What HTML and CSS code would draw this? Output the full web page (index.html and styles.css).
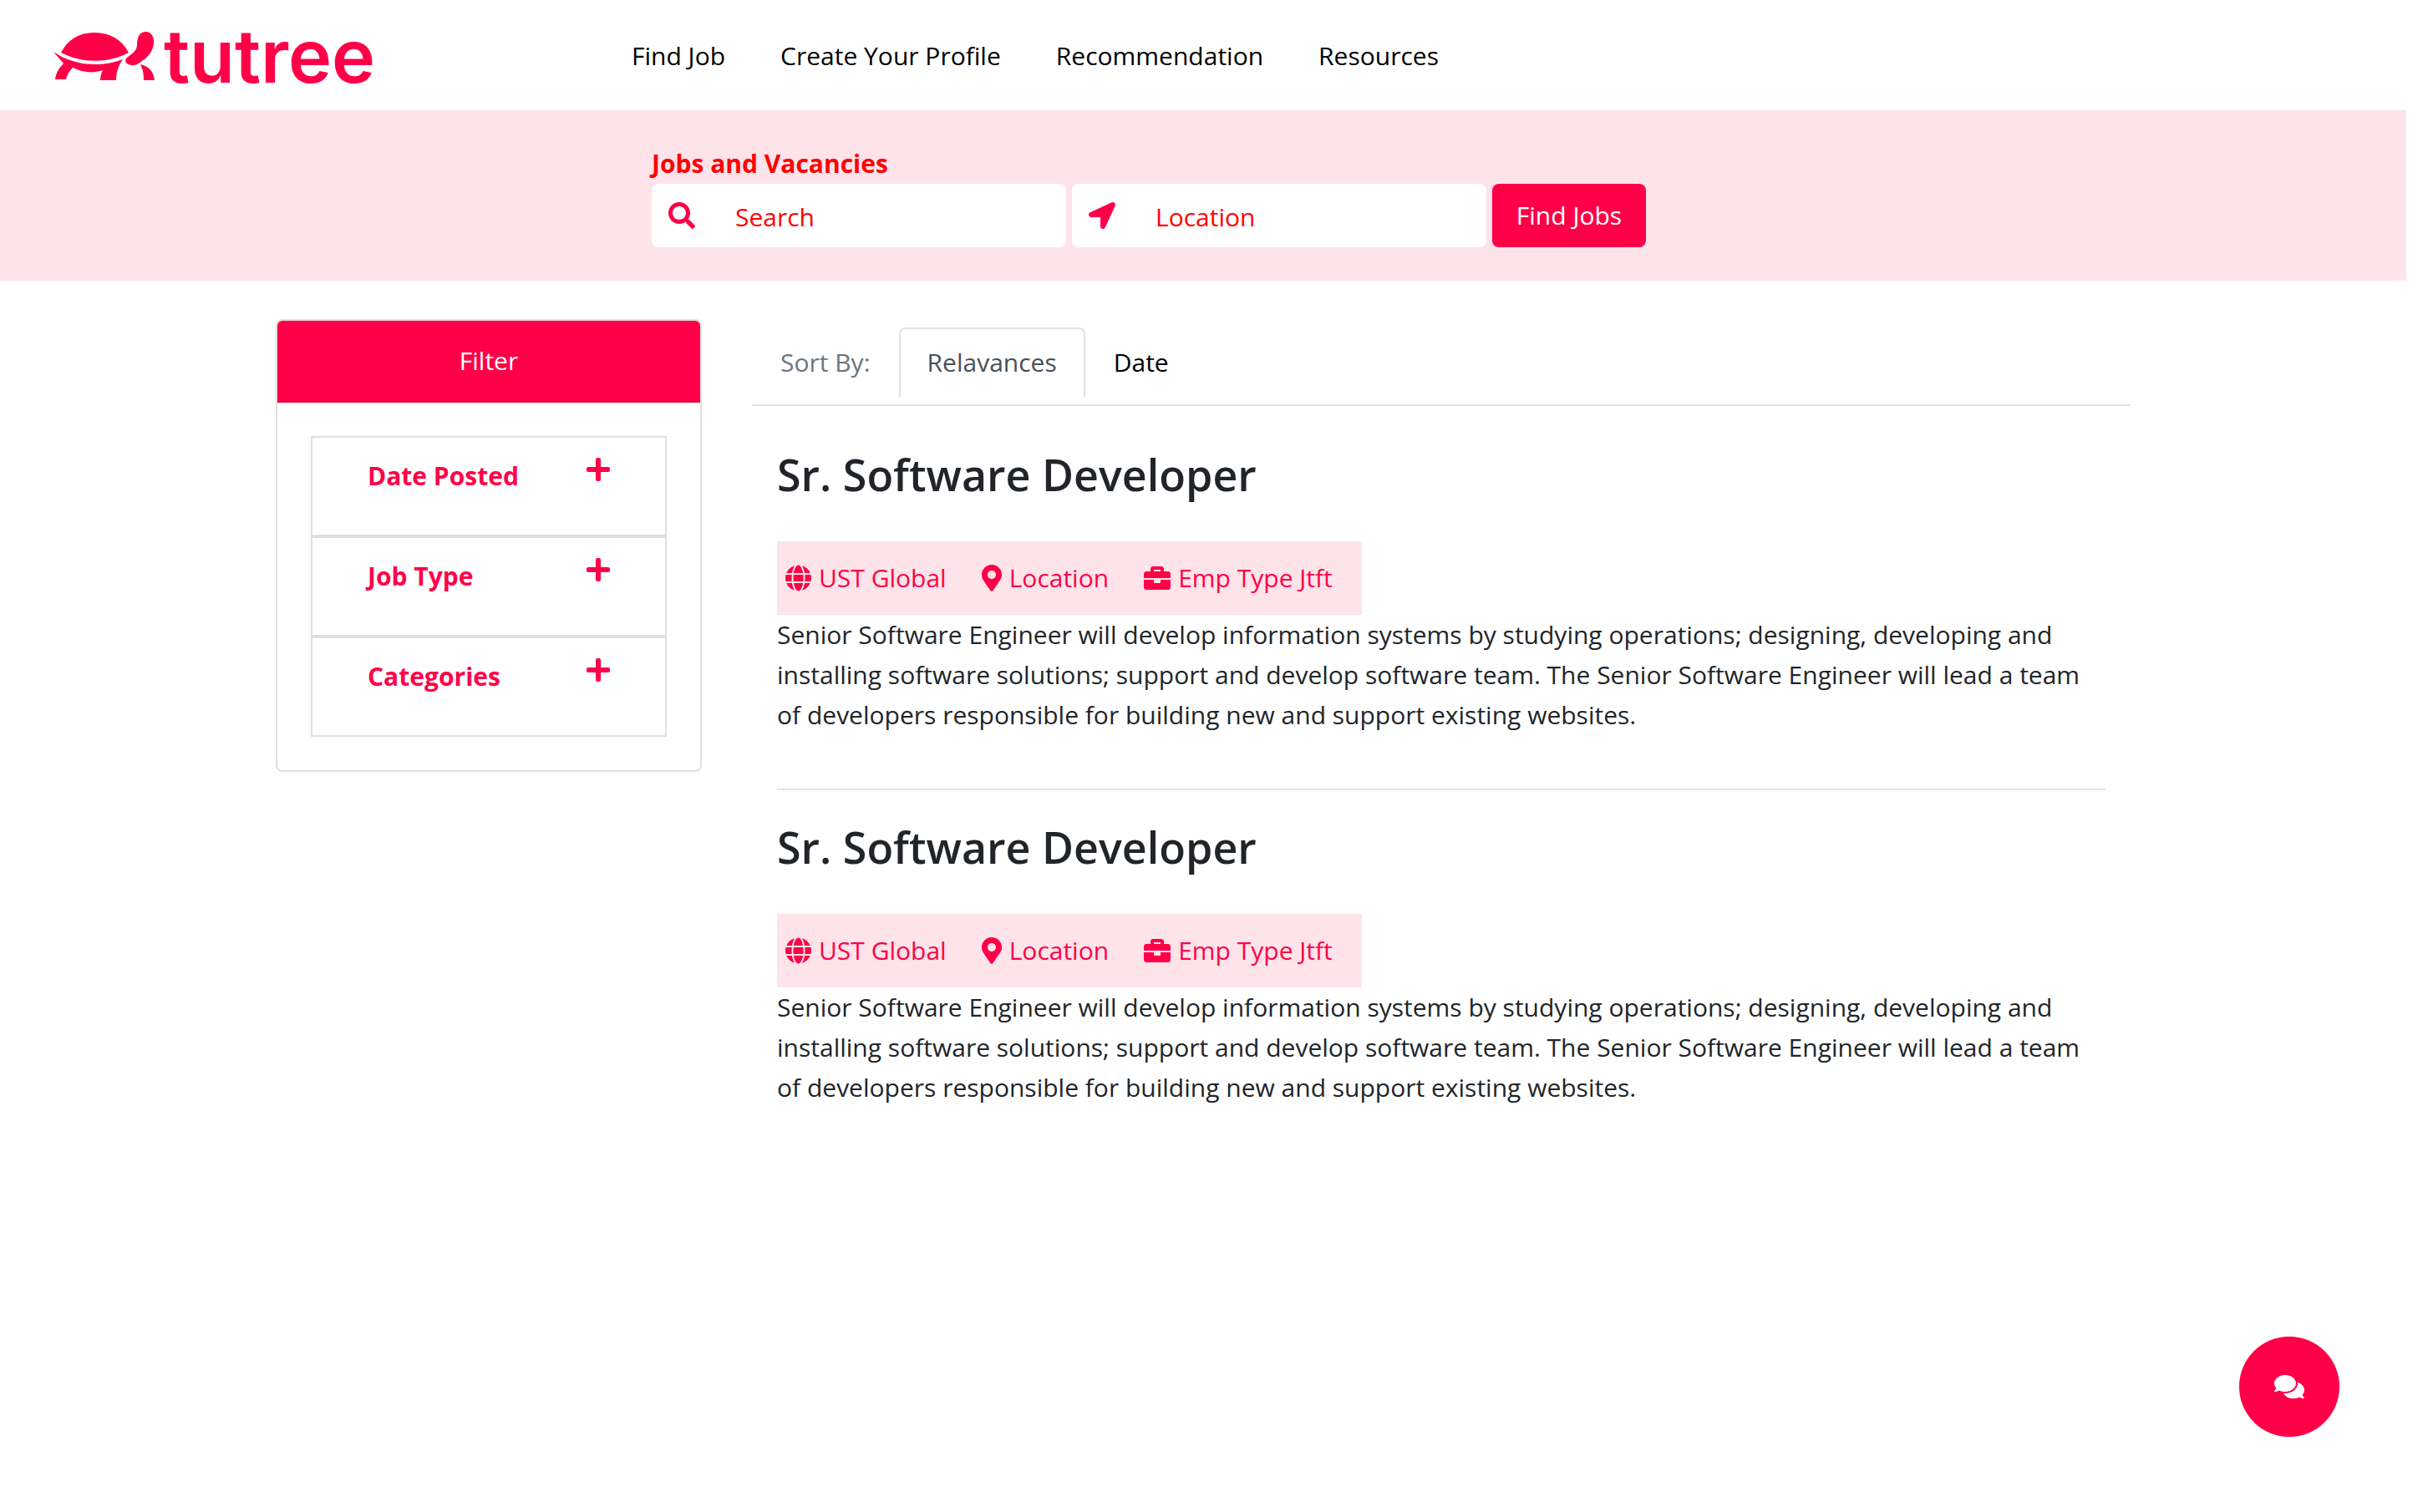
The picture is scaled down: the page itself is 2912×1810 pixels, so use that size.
FILE: index.html
```html
<!DOCTYPE html>
<html lang="en">
<head>
<meta charset="utf-8">
<title>tutree – Jobs and Vacancies</title>
<link rel="stylesheet" href="styles.css">
</head>
<body>
<svg class="sprite" aria-hidden="true">
  <symbol id="i-search" viewBox="0 0 512 512"><path d="M505 442.7L405.3 343c-4.500-4.500-10.600-7-17-7H372c27.600-35.300 44-79.700 44-128C416 93.100 322.900 0 208 0S0 93.100 0 208s93.100 208 208 208c48.300 0 92.700-16.400 128-44v16.300c0 6.400 2.500 12.500 7 17l99.700 99.700c9.400 9.400 24.600 9.400 33.900 0l28.300-28.300c9.400-9.400 9.400-24.600.1-34zM208 336c-70.700 0-128-57.200-128-128 0-70.700 57.200-128 128-128 70.700 0 128 57.200 128 128 0 70.700-57.200 128-128 128z"/></symbol>
  <symbol id="i-arrow" viewBox="0 0 512 512"><path d="M444.520 3.520L28.740 195.420c-47.970 22.390-31.980 92.750 19.190 92.750h175.910v175.910c0 51.170 70.360 67.170 92.750 19.190l191.900-415.780c15.990-38.390-25.590-79.970-63.970-63.970z"/></symbol>
  <symbol id="i-plus" viewBox="0 0 448 512"><path d="M416 208H272V64c0-17.670-14.330-32-32-32h-32c-17.670 0-32 14.330-32 32v144H32c-17.670 0-32 14.330-32 32v32c0 17.670 14.330 32 32 32h144v144c0 17.670 14.330 32 32 32h32c17.670 0 32-14.330 32-32V304h144c17.670 0 32-14.330 32-32v-32c0-17.670-14.330-32-32-32z"/></symbol>
  <symbol id="i-globe" viewBox="0 0 496 512"><path d="M336.500 160C322 70.700 287.800 8 248 8s-74 62.700-88.500 152h177zM152 256c0 22.200 1.200 43.500 3.300 64h185.300c2.100-20.500 3.300-41.800 3.300-64s-1.200-43.500-3.300-64H155.300c-2.100 20.500-3.300 41.800-3.300 64zm324.700-96c-28.600-67.900-86.500-120.400-158-141.600 24.400 33.800 41.200 84.700 50 141.600h108zM177.200 18.400C105.800 39.600 47.800 92.100 19.300 160h108c8.700-56.900 25.500-107.800 49.900-141.600zM487.400 192H372.700c2.100 21 3.300 42.500 3.300 64s-1.200 43-3.300 64h114.600c5.500-20.500 8.600-41.800 8.600-64s-3.100-43.500-8.500-64zM120 256c0-21.500 1.200-43 3.300-64H8.600C3.200 212.500 0 233.800 0 256s3.200 43.500 8.600 64h114.600c-2-21-3.200-42.500-3.200-64zm39.500 96c14.500 89.300 48.700 152 88.500 152s74-62.700 88.500-152h-177zm159.300 141.600c71.400-21.200 129.400-73.700 158-141.600h-108c-8.800 56.900-25.600 107.800-50 141.600zM19.300 352c28.600 67.900 86.500 120.400 158 141.600-24.400-33.800-41.200-84.700-50-141.600h-108z"/></symbol>
  <symbol id="i-marker" viewBox="0 0 384 512"><path d="M172.268 501.670C26.970 291.031 0 269.413 0 192 0 85.961 85.961 0 192 0s192 85.961 192 192c0 77.413-26.970 99.031-172.268 309.670-9.535 13.774-29.930 13.773-39.464 0zM192 272c44.183 0 80-35.817 80-80s-35.817-80-80-80-80 35.817-80 80 35.817 80 80 80z"/></symbol>
  <symbol id="i-briefcase" viewBox="0 0 512 512"><path d="M320 336c0 8.840-7.160 16-16 16h-96c-8.840 0-16-7.160-16-16v-48H0v144c0 25.600 22.400 48 48 48h416c25.600 0 48-22.400 48-48V288H320v48zm144-208h-80V80c0-25.600-22.400-48-48-48H176c-25.600 0-48 22.400-48 48v48H48c-25.600 0-48 22.400-48 48v80h512v-80c0-25.600-22.400-48-48-48zm-144 0H192V96h128v32z"/></symbol>
  <symbol id="i-comments" viewBox="0 0 576 512"><path d="M416 192c0-88.400-93.100-160-208-160S0 103.600 0 192c0 34.300 14.100 65.900 38 92-13.400 30.200-35.500 54.200-35.800 54.500-2.200 2.300-2.800 5.700-1.500 8.700S4.800 352 8 352c36.600 0 66.900-12.300 88.700-25 32.200 15.700 70.300 25 111.300 25 114.900 0 208-71.600 208-160zm122 220c23.900-26 38-57.700 38-92 0-66.900-53.500-124.200-129.300-148.100.9 6.600 1.300 13.300 1.300 20.100 0 105.900-107.700 192-240 192-10.800 0-21.300-.8-31.700-1.900C207.800 439.600 281.800 480 368 480c41 0 79.100-9.200 111.300-25 21.800 12.700 52.100 25 88.700 25 3.200 0 6.100-1.900 7.300-4.800 1.300-2.900.7-6.300-1.500-8.700-.3-.3-22.400-24.200-35.800-54.500z"/></symbol>
</svg>

<header class="header">
  <a class="logo" href="#" aria-label="tutree">
    <svg class="logo-turtle" viewBox="0 0 124 60" aria-hidden="true">
      <path d="M9 26C17 10 31 2 49 2s33 8 41 24C66 39 34 39 9 26z"/>
      <path d="M0 25C24 42 58 44 83 34c-5 7-8 15-8 25H56c0-4 1-8 3-12-11 4-24 3-36-3-4 4-7 9-8 14H2c1-8 5-14 10-19z"/>
      <path d="M109 1c7-1 12 5 11 14-1 8-5 14-11 19-5 3-9 8-16 7-6-1-9-5-5-9 5-4 12-8 12-15 0-8 2-15 9-16z"/>
      <path d="M104 40c10 2 16 9 17 19h-13c0-8-1-13-4-19z"/>
    </svg>
    <span class="logo-text">tutree</span>
  </a>
  <nav class="nav" aria-label="Main">
    <a href="#">Find Job</a>
    <a href="#">Create Your Profile</a>
    <a href="#">Recommendation</a>
    <a href="#">Resources</a>
  </nav>
</header>

<section class="search">
  <form class="search-form">
    <h1 class="search-title">Jobs and Vacancies</h1>
    <div class="search-row">
      <label class="field">
        <svg class="icon"><use href="#i-search"/></svg>
        <input type="text" placeholder="Search" aria-label="Search">
      </label>
      <label class="field">
        <svg class="icon"><use href="#i-arrow"/></svg>
        <input type="text" placeholder="Location" aria-label="Location">
      </label>
      <button class="find" type="button">Find Jobs</button>
    </div>
  </form>
</section>

<main class="container">
  <aside class="card">
    <h2 class="card-header">Filter</h2>
    <div class="card-body">
      <button class="filter" type="button"><span>Date Posted</span><svg class="icon icon-plus"><use href="#i-plus"/></svg></button>
      <button class="filter" type="button"><span>Job Type</span><svg class="icon icon-plus"><use href="#i-plus"/></svg></button>
      <button class="filter" type="button"><span>Categories</span><svg class="icon icon-plus"><use href="#i-plus"/></svg></button>
    </div>
  </aside>
  <section class="results">
    <div class="tabs">
      <span class="tab tab-label">Sort By:</span>
      <a class="tab tab-active" href="#">Relavances</a>
      <a class="tab" href="#">Date</a>
    </div>
    <article class="job">
      <h3 class="job-title">Sr. Software Developer</h3>
      <div class="meta">
        <span class="meta-item"><svg class="icon icon-globe"><use href="#i-globe"/></svg>UST Global</span>
        <span class="meta-item"><svg class="icon icon-marker"><use href="#i-marker"/></svg>Location</span>
        <span class="meta-item"><svg class="icon"><use href="#i-briefcase"/></svg>Emp Type Jtft</span>
      </div>
      <p class="job-text">Senior Software Engineer will develop information systems by studying operations; designing, developing and installing software solutions; support and develop software team. The Senior Software Engineer will lead a team of developers responsible for building new and support existing websites.</p>
    </article>
    <article class="job">
      <h3 class="job-title">Sr. Software Developer</h3>
      <div class="meta">
        <span class="meta-item"><svg class="icon icon-globe"><use href="#i-globe"/></svg>UST Global</span>
        <span class="meta-item"><svg class="icon icon-marker"><use href="#i-marker"/></svg>Location</span>
        <span class="meta-item"><svg class="icon"><use href="#i-briefcase"/></svg>Emp Type Jtft</span>
      </div>
      <p class="job-text">Senior Software Engineer will develop information systems by studying operations; designing, developing and installing software solutions; support and develop software team. The Senior Software Engineer will lead a team of developers responsible for building new and support existing websites.</p>
    </article>
  </section>
</main>

<button class="chat" type="button" aria-label="Open chat"><svg class="icon icon-comments"><use href="#i-comments"/></svg></button>
</body>
</html>
```
FILE: styles.css
```css
:root {
  --brand: #ff0048;
  --tint: #fee4ea;
  --line: #dfdfdf;
  --tab-line: #dee2e6;
}

* { box-sizing: border-box; }

body {
  margin: 0;
  padding-right: 32px;
  background: #fff;
  color: #212529;
  font-family: "Open Sans", "Noto Sans", sans-serif;
  font-size: 30px;
  line-height: 48px;
}

h1, h2, h3, p { margin: 0; }
a { color: #000; text-decoration: none; }
button, input { font: inherit; }
button { cursor: pointer; }

.sprite { display: none; }
.icon { width: 32px; height: 32px; fill: currentColor; flex: none; }
.icon-plus { width: 28px; }
.icon-globe { width: 31px; }
.icon-marker { width: 24px; }
.icon-comments { width: 36px; }

/* Header */
.header {
  display: flex;
  align-items: center;
  height: 132px;
  padding: 2px 0 0 64px;
}
.logo {
  display: flex;
  align-items: center;
  gap: 8px;
  width: 692px;
  color: var(--brand);
}
.logo-turtle { width: 124px; height: 60px; fill: currentColor; }
.logo-text {
  font-family: Inter, sans-serif;
  font-size: 88px;
  font-weight: 600;
  line-height: 88px;
}
.nav { display: flex; gap: 66px; }

/* Search band */
.search {
  padding: 40px 0;
  background: var(--tint);
}
.search-form { margin-left: 780px; }
.search-title {
  color: #f00;
  font-size: 30px;
  font-weight: 700;
  line-height: 48px;
}
.search-row { display: flex; gap: 7px; }
.field {
  display: flex;
  align-items: center;
  gap: 48px;
  width: 496px;
  height: 76px;
  padding: 0 20px;
  border-radius: 8px;
  background: #fff;
  color: var(--brand);
}
.field input {
  flex: 1;
  min-width: 0;
  padding: 4px 0 0;
  border: 0;
  outline: 0;
  background: none;
  color: #f00;
}
.field input::placeholder { color: #f00; opacity: 1; }
.find {
  width: 184px;
  padding: 0;
  border: 0;
  border-radius: 8px;
  background: var(--brand);
  color: #fff;
}

/* Two-column content */
.container {
  display: grid;
  grid-template-columns: 510px 1fr;
  align-items: start;
  gap: 60px;
  max-width: 2280px;
  margin: 46px auto 0;
  padding: 0 30px;
}
.card {
  overflow: hidden;
  border: 2px solid var(--line);
  border-radius: 8px;
}
.card-header {
  padding: 24px 40px;
  border-bottom: 2px solid #df003f;
  background: var(--brand);
  color: #fff;
  font-size: 30px;
  font-weight: 400;
  text-align: center;
}
.card-body { padding: 40px; }
.filter {
  display: flex;
  align-items: flex-start;
  justify-content: space-between;
  width: 100%;
  height: 120px;
  padding: 22px 66px;
  border: 2px solid var(--line);
  background: #fff;
  color: var(--brand);
  font-weight: 700;
}

/* Sorting tabs */
.tabs {
  display: flex;
  margin-top: 10px;
  padding-bottom: 8px;
  border-bottom: 2px solid var(--tab-line);
}
.tab {
  padding: 16px 32px;
  border: 2px solid transparent;
  border-radius: 8px 8px 0 0;
}
.tab-label { color: #6c757d; }
.tab-active {
  border-color: var(--tab-line) var(--tab-line) #fff;
  color: #495057;
}

/* Job list */
.job {
  margin: 0 30px;
  padding: 34px 0;
}
.job + .job { border-top: 2px solid #e5e5e5; }
.job:first-of-type { padding-top: 48px; padding-bottom: 64px; }
.job-title {
  margin-bottom: 46px;
  font-size: 52px;
  font-weight: 600;
  line-height: 68px;
}
.meta {
  display: flex;
  align-items: center;
  gap: 42px;
  width: 700px;
  height: 88px;
  padding: 0 10px;
  background: var(--tint);
  color: var(--brand);
}
.meta-item { display: flex; align-items: center; gap: 9px; }

/* Chat launcher floats over the page */
.chat {
  position: fixed;
  right: 112px;
  bottom: 90px;
  display: flex;
  align-items: center;
  justify-content: center;
  width: 120px;
  height: 120px;
  border: 0;
  border-radius: 50%;
  background: var(--brand);
  color: #fff;
}
```
